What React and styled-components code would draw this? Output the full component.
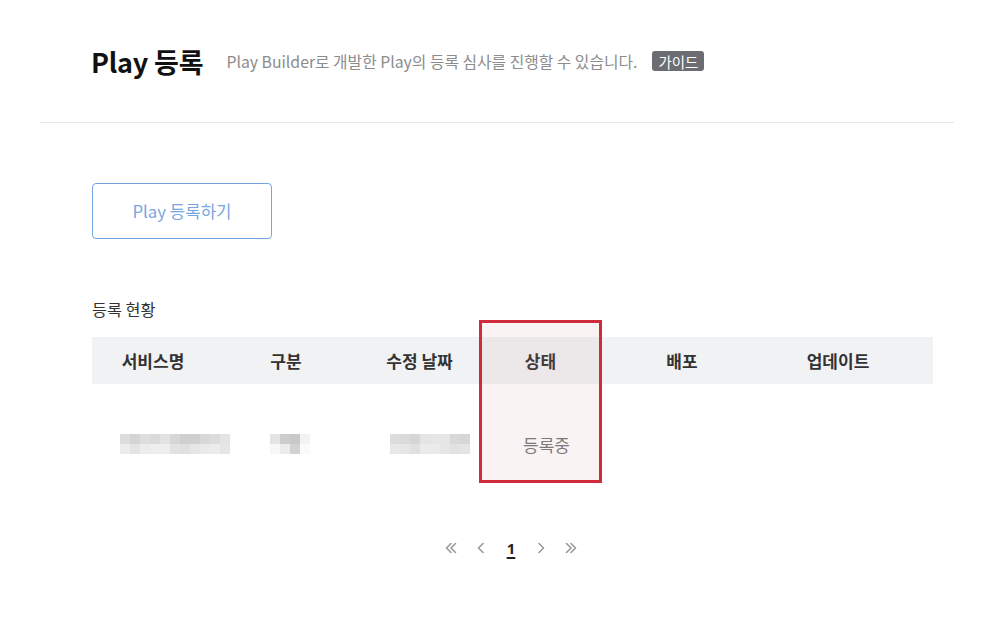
import React from "react";
import styled, { createGlobalStyle } from "styled-components";

const GlobalStyle = createGlobalStyle`
  html, body {
    margin: 0;
    padding: 0;
    background: #ffffff;
    font-family: "Noto Sans CJK KR", "Noto Sans", sans-serif;
    color: #333333;
  }
`;

const COLUMNS = "122px 144px 123px 119px 164px 148px 1fr";

const BLUR_ROWS = {
  name: [
    ["#dcdcdc", "#d4d4d4", "#dedede", "#dadada", "#e2e2e2", "#d6d6d6", "#cfcfcf", "#cfcfcf", "#d8d8d8", "#dcdcdc", "#e4e4e4"],
    ["#ececec", "#e4e4e4", "#ececec", "#eeeeee", "#eeeeee", "#e2e2e2", "#e0e0e0", "#e6e6e6", "#eaeaea", "#ececec", "#e6e6e6"],
  ],
  type: [
    ["#e4e4e4", "#cdcdcd", "#c9c9c9", "#f2f4f4"],
    ["#f7f7f7", "#ececec", "#d2d2d2", "#fafafa"],
  ],
  date: [
    ["#dcdcdc", "#dadada", "#d6d6d6", "#e4e4e4", "#e6e6e6", "#e6e6e6", "#d8d8d8", "#d6d6d6"],
    ["#e8e8e8", "#e6e6e6", "#e0e0e0", "#ebebeb", "#eaeaea", "#e6e6e6", "#e2e2e2", "#e4e4e4"],
  ],
};

const Page = styled.div`
  margin: 0 40px;
`;

const Header = styled.header`
  height: 122px;
  display: flex;
  align-items: center;
  padding-left: 51px;
  border-bottom: 1px solid #e6e6e6;
`;

const Title = styled.h1`
  margin: 0 23px 0 0;
  font-size: 27px;
  font-weight: 700;
  color: #111111;
  letter-spacing: -0.2px;
`;

const Subtitle = styled.p`
  margin: 0 15px 0 0;
  font-size: 15.8px;
  color: #8c8c8c;
`;

const Badge = styled.span`
  display: inline-flex;
  align-items: center;
  height: 20px;
  padding: 0 6px;
  border-radius: 3px;
  background: #6b6d72;
  color: #ffffff;
  font-size: 14.5px;
`;

const Content = styled.main`
  padding: 60px 0 40px 52px;
`;

const RegisterButton = styled.button`
  width: 180px;
  height: 56px;
  border: 1px solid #74a4e2;
  border-radius: 4px;
  background: #ffffff;
  color: #7aa6e0;
  font-family: inherit;
  font-size: 16.8px;
  cursor: pointer;
`;

const SectionLabel = styled.h2`
  margin: 59px 0 17px;
  font-size: 16.3px;
  line-height: 22px;
  font-weight: 400;
  color: #333333;
`;

const TableWrap = styled.div`
  position: relative;
  width: 841px;
`;

const Row = styled.div`
  display: grid;
  grid-template-columns: ${COLUMNS};
  height: ${(p) => p.$height}px;
  background: ${(p) => p.$bg || "transparent"};
`;

const HeadCell = styled.div`
  display: flex;
  align-items: center;
  justify-content: center;
  font-size: 17px;
  font-weight: 700;
  color: #333333;
`;

const BodyCell = styled.div`
  display: flex;
  align-items: center;
  padding-left: ${(p) => p.$pad}px;
`;

const StatusText = styled.span`
  font-size: 17px;
  color: #777777;
  margin-top: 2px;
`;

const Blur = styled.div`
  display: grid;
  grid-auto-flow: column;
  grid-template-rows: 10px 10px;
  grid-auto-columns: 10px;
  margin-top: 2px;
`;

const BlurBlock = styled.span`
  background: ${(p) => p.$c};
`;

const Highlight = styled.div`
  position: absolute;
  left: 387px;
  top: -17px;
  width: 123px;
  height: 163px;
  box-sizing: border-box;
  border: 3px solid #d02b3b;
  background: rgba(195, 135, 135, 0.1);
  pointer-events: none;
`;

const Pagination = styled.nav`
  display: flex;
  justify-content: center;
  align-items: center;
  gap: 14px;
  width: 841px;
  margin-top: 36px;
  height: 20px;
  padding-right: 3px;
  box-sizing: border-box;
`;

const PageArrow = styled.span`
  display: flex;
  align-items: center;
  justify-content: center;
  width: 16px;
  height: 20px;
  color: #9a9a9a;
`;

const PageNumber = styled.span`
  width: 16px;
  text-align: center;
  font-size: 15px;
  font-weight: 700;
  color: #222222;
  text-decoration: underline;
  text-underline-offset: 3px;
  text-decoration-thickness: 2px;
  font-family: "Noto Sans", sans-serif;
`;

const Chevron = ({ dir = "left", double = false }) => {
  const flip = dir === "right" ? "scale(-1,1) translate(-14,0)" : undefined;
  return (
    <svg width="14" height="14" viewBox="0 0 14 14" fill="none">
      <g transform={flip} stroke="currentColor" strokeWidth="1.6" strokeLinecap="round" strokeLinejoin="round">
        {double ? (
          <>
            <path d="M7 2.5 L2.5 7 L7 11.5" />
            <path d="M11.5 2.5 L7 7 L11.5 11.5" />
          </>
        ) : (
          <path d="M9 2.5 L4.5 7 L9 11.5" />
        )}
      </g>
    </svg>
  );
};

const BlurCell = ({ rows }) => (
  <Blur>
    {rows[0].map((c, i) => (
      <React.Fragment key={i}>
        <BlurBlock $c={c} />
        <BlurBlock $c={rows[1][i]} />
      </React.Fragment>
    ))}
  </Blur>
);

const HEADS = ["서비스명", "구분", "수정 날짜", "상태", "배포", "업데이트"];

export default function App() {
  return (
    <>
      <GlobalStyle />
      <Page>
        <Header>
          <Title>Play 등록</Title>
          <Subtitle>Play Builder로 개발한 Play의 등록 심사를 진행할 수 있습니다.</Subtitle>
          <Badge>가이드</Badge>
        </Header>
        <Content>
          <RegisterButton>Play 등록하기</RegisterButton>
          <SectionLabel>등록 현황</SectionLabel>
          <TableWrap>
            <Row $height={47} $bg="#f1f2f4">
              {HEADS.map((h) => (
                <HeadCell key={h}>{h}</HeadCell>
              ))}
            </Row>
            <Row $height={118}>
              <BodyCell $pad={28}>
                <BlurCell rows={BLUR_ROWS.name} />
              </BodyCell>
              <BodyCell $pad={56}>
                <BlurCell rows={BLUR_ROWS.type} />
              </BodyCell>
              <BodyCell $pad={32}>
                <BlurCell rows={BLUR_ROWS.date} />
              </BodyCell>
              <BodyCell $pad={42}>
                <StatusText>등록중</StatusText>
              </BodyCell>
              <BodyCell $pad={0} />
              <BodyCell $pad={0} />
            </Row>
            <Highlight />
          </TableWrap>
          <Pagination>
            <PageArrow>
              <Chevron double />
            </PageArrow>
            <PageArrow>
              <Chevron />
            </PageArrow>
            <PageNumber>1</PageNumber>
            <PageArrow>
              <Chevron dir="right" />
            </PageArrow>
            <PageArrow>
              <Chevron dir="right" double />
            </PageArrow>
          </Pagination>
        </Content>
      </Page>
    </>
  );
}
